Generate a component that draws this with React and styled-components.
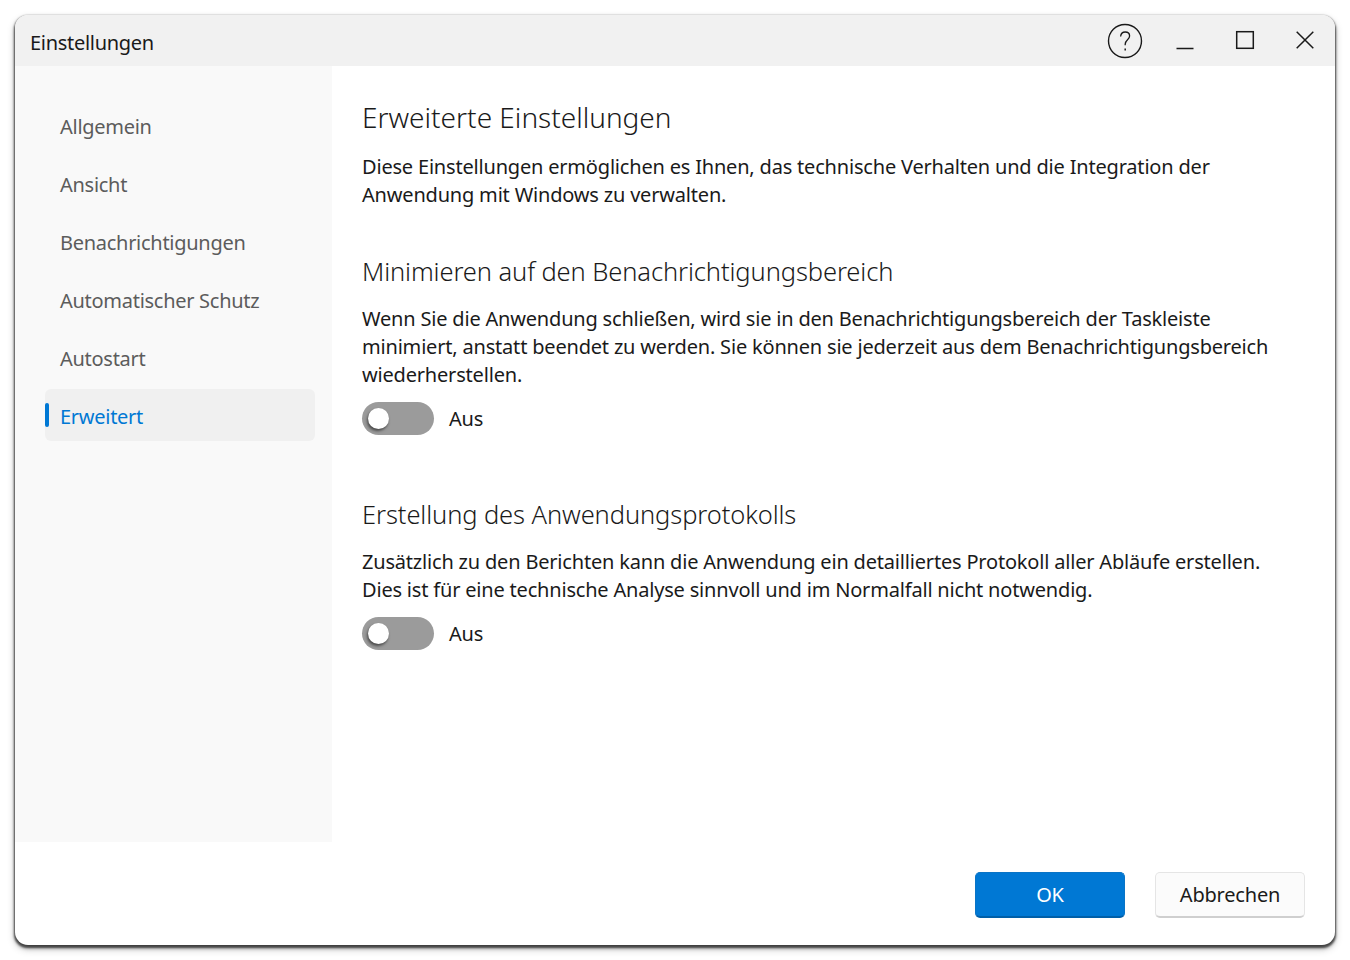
import React from "react";
import styled, { createGlobalStyle } from "styled-components";

const Global = createGlobalStyle`
  html, body { margin: 0; padding: 0; background: #fff; }
  body { width: 1350px; height: 960px; overflow: hidden; font-family: "Noto Sans", "Open Sans", sans-serif; color: #1a1a1a; }
  #root { padding: 15px; width: 1350px; height: 960px; box-sizing: border-box; }
`;

const Window = styled.div`
  width: 1320px; height: 930px; background: #fff; border-radius: 13px; display: flex; flex-direction: column; overflow: hidden;
  box-shadow: 0 2px 2px 0.5px rgba(0,0,0,.55), 0 3px 4px 0 rgba(0,0,0,.35), 0 4px 8px rgba(0,0,0,.2), 0 0 2px rgba(0,0,0,.2);
`;
const TitleBar = styled.header`
  height: 51px; flex: none; background: #f1f1f1; display: flex; align-items: center; justify-content: space-between; padding: 0 0 0 15px;
`;
const Title = styled.span`font-size: 20px; letter-spacing: -0.3px; color: #1a1a1a; padding-top: 4px;`;
const WinControls = styled.div`display: flex; align-items: center; gap: 0;`;
const WinIcon = styled.svg`width: 60px; height: 51px; display: block; fill: none; stroke: #1a1a1a; stroke-width: 1.5;`;
const Body = styled.div`display: flex; height: 776px; flex: none;`;
const Sidebar = styled.nav`
  width: 317px; flex: none; background: #f9f9f9; padding: 33px 17px 0 30px; box-sizing: border-box; display: flex; flex-direction: column; gap: 6px;
`;
const NavItem = styled.div`
  position: relative; height: 52px; border-radius: 6px; display: flex; align-items: center; padding: 2px 0 0 15px; box-sizing: border-box; font-size: 20px; letter-spacing: -0.28px;
  color: ${p => (p.$active ? "#0078d4" : "#5c5c5c")}; background: ${p => (p.$active ? "#f0f0f0" : "transparent")};
  ${p => p.$active && `&::before { content: ""; position: absolute; left: 0; top: 14px; height: 24px; width: 4px; border-radius: 2px; background: #0078d4; }`}
`;
const Main = styled.main`flex: 1; padding: 30px 30px 0; box-sizing: border-box; min-width: 0;`;
const H1 = styled.h1`font-size: 28px; font-weight: 300; line-height: 42px; margin: 0 0 15px; color: #1a1a1a; font-family: "Noto Sans", sans-serif;`;
const H2 = styled.h2`font-size: 25.5px; font-weight: 300; line-height: 38px; margin: 0 0 15px; color: #1a1a1a; letter-spacing: -0.1px;`;
const Text = styled.p`font-size: 20px; line-height: 28px; margin: 0; color: #1a1a1a; letter-spacing: -0.19px;`;
const Section = styled.section`margin-top: ${p => p.$top}px;`;
const ToggleRow = styled.div`display: flex; align-items: center; gap: 15px; margin-top: 13px; height: 33px;`;
const Track = styled.div`position: relative; width: 72px; height: 33px; border-radius: 17px; background: #9b9b9b;`;
const Knob = styled.div`position: absolute; left: 6px; top: 6px; width: 21px; height: 21px; border-radius: 50%; background: #fff; box-shadow: -1px 2px 3px rgba(0,0,0,.55);`;
const ToggleLabel = styled.span`font-size: 20px; letter-spacing: -0.2px; color: #1a1a1a;`;
const Footer = styled.footer`flex: 1; display: flex; align-items: flex-start; justify-content: flex-end; gap: 30px; padding: 30px 30px 0;`;
const Button = styled.button`
  width: 150px; height: 46px; border-radius: 5px; font-family: inherit; font-size: 20px; letter-spacing: -0.2px; padding: 0; box-sizing: border-box;
  background: ${p => (p.$primary ? "#0078d4" : "#fbfbfb")}; color: ${p => (p.$primary ? "#fff" : "#1a1a1a")};
  border: 1px solid ${p => (p.$primary ? "#0a74c6" : "#e5e5e5")}; border-bottom: 2px solid ${p => (p.$primary ? "#005fa8" : "#cfcfcf")};
`;

const Toggle = () => (
  <ToggleRow><Track><Knob /></Track><ToggleLabel>Aus</ToggleLabel></ToggleRow>
);

export default function App() {
  return (
    <>
      <Global />
      <Window>
        <TitleBar>
          <Title>Einstellungen</Title>
          <WinControls>
            <WinIcon viewBox="0 0 60 51">
              <circle cx="30" cy="26" r="16.5" strokeWidth="1.4" />
              <path d="M25.6 21.5c.3-2.9 2.2-4.5 4.6-4.5 2.6 0 4.4 1.7 4.4 4 0 3.7-4.4 3.8-4.4 8.2v1" strokeWidth="1.3" />
              <path d="M30.2 33.6v1.8" strokeWidth="1.5" />
            </WinIcon>
            <WinIcon viewBox="0 0 60 51"><path d="M21.5 33.5h17" /></WinIcon>
            <WinIcon viewBox="0 0 60 51"><rect x="21.7" y="16.7" width="16.6" height="16.6" /></WinIcon>
            <WinIcon viewBox="0 0 60 51"><path d="M21.7 16.7l16.6 16.6M38.3 16.7L21.7 33.3" /></WinIcon>
          </WinControls>
        </TitleBar>
        <Body>
          <Sidebar>
            {["Allgemein", "Ansicht", "Benachrichtigungen", "Automatischer Schutz", "Autostart"].map(t => <NavItem key={t}>{t}</NavItem>)}
            <NavItem $active>Erweitert</NavItem>
          </Sidebar>
          <Main>
            <H1>Erweiterte Einstellungen</H1>
            <Text>Diese Einstellungen ermöglichen es Ihnen, das technische Verhalten und die Integration der<br />Anwendung mit Windows zu verwalten.</Text>
            <Section $top={43}>
              <H2>Minimieren auf den Benachrichtigungsbereich</H2>
              <Text>Wenn Sie die Anwendung schließen, wird sie in den Benachrichtigungsbereich der Taskleiste<br />minimiert, anstatt beendet zu werden. Sie können sie jederzeit aus dem Benachrichtigungsbereich<br />wiederherstellen.</Text>
              <Toggle />
            </Section>
            <Section $top={60}>
              <H2>Erstellung des Anwendungsprotokolls</H2>
              <Text>Zusätzlich zu den Berichten kann die Anwendung ein detailliertes Protokoll aller Abläufe erstellen.<br />Dies ist für eine technische Analyse sinnvoll und im Normalfall nicht notwendig.</Text>
              <Toggle />
            </Section>
          </Main>
        </Body>
        <Footer>
          <Button $primary>OK</Button>
          <Button>Abbrechen</Button>
        </Footer>
      </Window>
    </>
  );
}
